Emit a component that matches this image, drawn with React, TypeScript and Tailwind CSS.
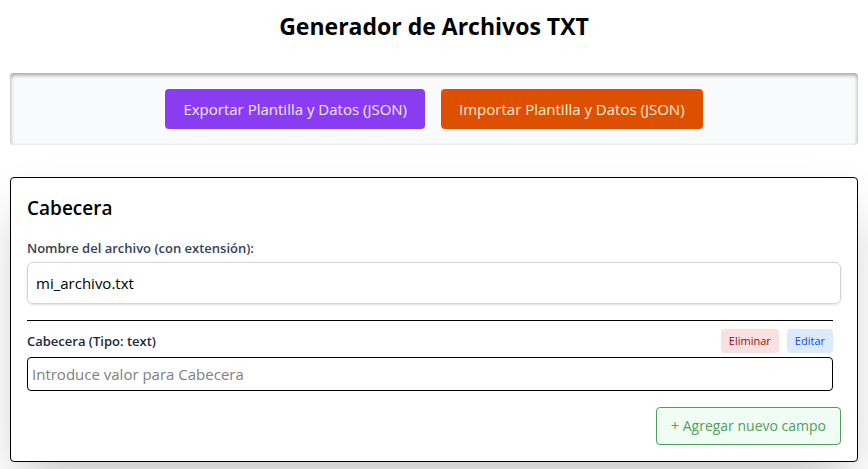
import { useState } from 'react';

export default function App() {
  const [fileName, setFileName] = useState('mi_archivo.txt');
  const [header, setHeader] = useState('');

  return (
    <main className="min-h-screen overflow-hidden bg-white px-[10px] pt-[10px] pb-1 font-['Open_Sans','Noto_Sans',sans-serif] text-[15px] leading-6 text-black">
      <h1 className="mb-[31px] text-center text-[23px] leading-8 font-bold">Generador de Archivos TXT</h1>

      <div className="mb-8 flex flex-wrap justify-center gap-4 rounded bg-gray-50 p-4 inset-shadow-[0_2px_4px_#03021360]">
        <button type="button" className="rounded bg-[#8a3cf3] px-[18px] py-2 text-purple-100">
          Exportar Plantilla y Datos (JSON)
        </button>
        <button type="button" className="rounded bg-[#de4f00] px-[18px] py-2 text-orange-100">
          Importar Plantilla y Datos (JSON)
        </button>
      </div>

      <section className="rounded border border-black bg-white p-4 shadow-2xl">
        <h2 className="mb-4 text-[19px] leading-7 font-semibold">Cabecera</h2>

        <label htmlFor="file-name" className="block text-[13px] leading-5 font-semibold text-gray-700">
          Nombre del archivo (con extensión):
        </label>
        <input
          id="file-name"
          type="text"
          value={fileName}
          onChange={(e) => setFileName(e.target.value)}
          className="mt-1 block w-full rounded-md border border-gray-300 p-2 shadow-sm"
        />

        <div className="mt-4 mr-2 border-t border-black pt-2">
          <div className="flex items-center justify-between">
            <label htmlFor="header-value" className="text-[13px] leading-5 font-semibold text-gray-800">
              Cabecera (Tipo: text)
            </label>
            <div className="flex gap-2 text-[11px] leading-4">
              <button type="button" className="rounded bg-[#f9e1e1] px-2 py-1 text-red-800">
                Eliminar
              </button>
              <button type="button" className="rounded bg-blue-100 px-2 py-1 text-blue-700">
                Editar
              </button>
            </div>
          </div>
          <input
            id="header-value"
            type="text"
            value={header}
            onChange={(e) => setHeader(e.target.value)}
            placeholder="Introduce valor para Cabecera"
            className="mt-1 block w-full rounded border border-black p-1 placeholder:text-[#808080]"
          />
        </div>

        <div className="mt-4 flex justify-end">
          <button
            type="button"
            className="rounded border border-[#4f9f5c] bg-green-50 px-[14px] py-2 text-[14px] leading-5 text-[#4f9f5c]"
          >
            + Agregar nuevo campo
          </button>
        </div>
      </section>
    </main>
  );
}
